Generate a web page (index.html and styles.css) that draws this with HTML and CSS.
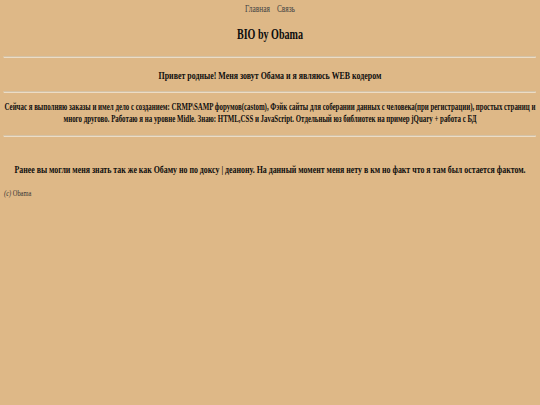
FILE: index.html
```html
<!DOCTYPE html>
<html lang="ru">
<head>
<meta charset="utf-8">
<title>BIO by Obama</title>
<link rel="stylesheet" href="styles.css">
</head>
<body>
<div class="frame">
  <div class="page">
    <nav class="nav">
      <a class="nav-link" href="#">Главная</a>
      <a class="nav-link" href="#">Связь</a>
    </nav>
    <h1 class="title">BIO by Obama</h1>
    <hr class="rule rule-first">
    <h2 class="greeting">Привет родные! Меня зовут Обама и я являюсь WEB кодером</h2>
    <hr class="rule rule-second">
    <p class="about">Сейчас я выполняю заказы и имел дело с созданием: CRMP\SAMP форумов(castom), Фэйк сайты для соберании данных с человека(при регистрации), простых страниц и много другово. Работаю я на уровне Midle. Знаю: HTML,CSS и JavaScript. Отдельный юз библиотек на пример jQuary + работа с БД</p>
    <hr class="rule rule-third">
    <p class="past">Ранее вы могли меня знать так же как Обаму но по доксу | деанону. На данный момент меня нету в км но факт что я там был остается фактом.</p>
    <p class="sign"><i>(c)</i> Obama</p>
  </div>
</div>
</body>
</html>
```

FILE: styles.css
```css
html, body {
  margin: 0;
  padding: 0;
  background: #deb887;
}

body {
  font-family: "Liberation Serif", "Times New Roman", serif;
  color: #0d0d0d;
}

.frame {
  width: 540px;
  height: 405px;
  overflow: hidden;
}

.page {
  box-sizing: border-box;
  width: 729.7px;
  padding: 0 5.4px;
  transform: scaleX(0.74);
  transform-origin: 0 0;
}

.nav {
  margin: 4px 0 0;
  text-align: center;
  font-size: 10px;
  line-height: 10px;
}

.nav-link {
  color: #444;
  text-decoration: none;
  margin: 0 3.5px;
}

.title {
  margin: 13px 0 0;
  text-align: center;
  font-size: 13.6px;
  line-height: 16px;
  font-weight: bold;
}

.rule {
  border: 0;
  height: 1px;
  border-top: 1px solid #d4c2a6;
  background: #ecdcc5;
  margin: 0;
}

.rule-first { margin-top: 12.9px; }

.greeting {
  margin: 10.1px 0 0;
  text-align: center;
  font-size: 10.7px;
  line-height: 14px;
  font-weight: bold;
}

.rule-second { margin-top: 9.3px; }

.about {
  margin: 9px 0 0;
  text-align: center;
  font-size: 9.3px;
  line-height: 11.5px;
  font-weight: bold;
}

.rule-third { margin-top: 9.3px; }

.past {
  margin: 26px 0 0;
  text-align: center;
  font-size: 10.65px;
  line-height: 13px;
  font-weight: bold;
}

.sign {
  margin: 13.9px 0 0;
  font-size: 8.7px;
  line-height: 9px;
  color: #333;
}
```
